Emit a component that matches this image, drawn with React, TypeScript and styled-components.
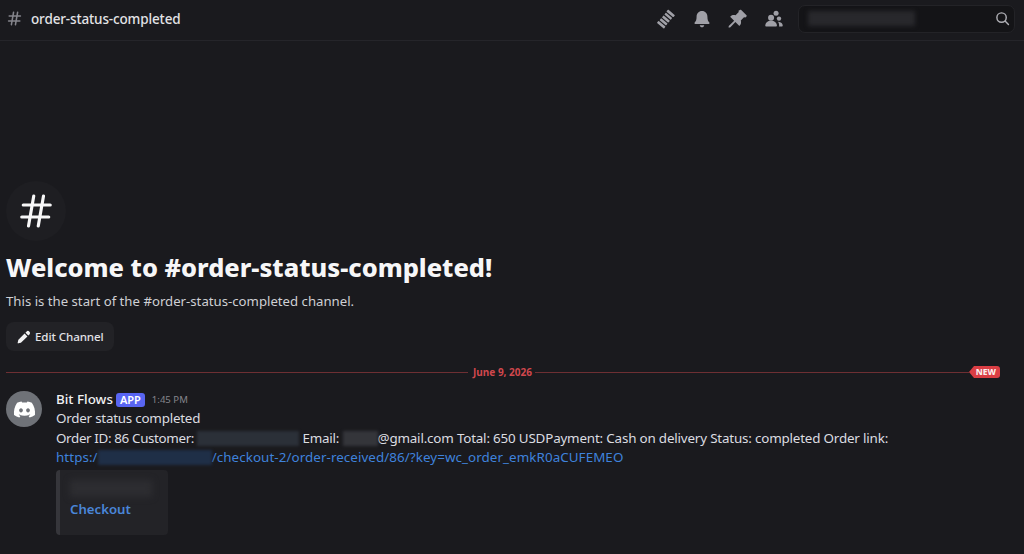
import React from "react";
import styled, { createGlobalStyle } from "styled-components";
import { FaDiscord } from "react-icons/fa";

const Global = createGlobalStyle`
  html, body { margin: 0; padding: 0; background: #1a1a1e; }
  body { font-family: "Noto Sans", "Liberation Sans", sans-serif; color: #dfe0e4; overflow: hidden; }
  * { box-sizing: border-box; }
`;

const Page = styled.div`
  width: 1024px;
  height: 554px;
  display: flex;
  flex-direction: column;
  background: #1a1a1e;
  overflow: hidden;
`;

const Header = styled.header`
  height: 41px;
  flex: none;
  display: flex;
  align-items: center;
  padding: 0 9px 3px 7px;
  border-bottom: 1px solid #25252a;
`;

const HeaderHash = styled.svg`
  width: 15px;
  height: 15px;
  color: #85858c;
  flex: none;
`;

const HeaderTitle = styled.h1`
  margin: 0 0 0 9px;
  font-size: 13.5px;
  font-weight: 500;
  line-height: 18px;
  letter-spacing: -0.14px;
  color: #e3e3e6;
  flex: 1;
`;

const Tools = styled.div`
  display: flex;
  align-items: center;
  gap: 16px;
  margin-right: 14px;
`;

const ToolIcon = styled.svg`
  width: 20px;
  height: 20px;
  color: #a0a0a7;
  display: block;
`;

const Search = styled.div`
  width: 217px;
  height: 28px;
  display: flex;
  align-items: center;
  justify-content: space-between;
  padding: 0 4px 0 9px;
  background: #141417;
  border: 1px solid #232327;
  border-radius: 7px;
`;

const SearchBlur = styled.div`
  width: 107px;
  height: 15px;
  background: #28282c;
  filter: blur(2px);
`;

const SearchIcon = styled.svg`
  width: 15px;
  height: 15px;
  color: #b0b0b6;
`;

const Main = styled.main`
  flex: 1;
  display: flex;
  flex-direction: column;
  padding-top: 140px;
`;

const Welcome = styled.section`
  padding: 0 6px;
  display: flex;
  flex-direction: column;
  align-items: flex-start;
`;

const HashCircle = styled.div`
  width: 60px;
  height: 60px;
  border-radius: 50%;
  background: #1e1e22;
  display: flex;
  align-items: center;
  justify-content: center;
`;

const BigHash = styled.svg`
  width: 36px;
  height: 36px;
  color: #f7f7f8;
`;

const WelcomeTitle = styled.h2`
  margin: 10px 0 0;
  font-size: 25.4px;
  line-height: 32px;
  font-weight: 800;
  color: #f7f7f8;
`;

const WelcomeText = styled.p`
  margin: 9px 0 0;
  font-size: 13.2px;
  line-height: 19px;
  color: #cfd0d4;
`;

const EditButton = styled.button`
  margin-top: 11px;
  height: 29px;
  padding: 0 10px 0 11px;
  display: flex;
  align-items: center;
  gap: 4px;
  background: #222226;
  border: none;
  border-radius: 8px;
  color: #e3e3e6;
  font: 500 11.6px "Noto Sans", sans-serif;
  letter-spacing: -0.1px;
`;

const PencilIcon = styled.svg`
  width: 14px;
  height: 14px;
  color: #f2f2f3;
`;

const Divider = styled.div`
  display: flex;
  align-items: center;
  margin: 12px 24px 0 6px;
  height: 18px;
`;

const Line = styled.div<{ $grow?: boolean }>`
  height: 1px;
  background: #6e2f33;
  flex: ${(p) => (p.$grow ? 1 : "none")};
  width: ${(p) => (p.$grow ? "auto" : "462px")};
`;

const DateLabel = styled.span`
  padding: 0 3px 0 5px;
  font-size: 10px;
  font-weight: 700;
  line-height: 12px;
  color: #d0474d;
`;

const NewBadge = styled.span`
  position: relative;
  height: 12px;
  padding: 0 4px 0 2px;
  background: #da3e44;
  border-radius: 0 3px 3px 0;
  color: #fbeeee;
  font-size: 8.5px;
  font-weight: 800;
  line-height: 12px;
  margin-left: 5px;

  &::before {
    content: "";
    position: absolute;
    left: -5px;
    top: 0;
    border-style: solid;
    border-width: 6px 5px 6px 0;
    border-color: transparent #da3e44 transparent transparent;
  }
`;

const Message = styled.article`
  display: flex;
  gap: 14px;
  padding: 10px 6px 0;
`;

const Avatar = styled.div`
  width: 36px;
  height: 36px;
  flex: none;
  border-radius: 50%;
  background: #6f7278;
  color: #fff;
  display: flex;
  align-items: center;
  justify-content: center;
  font-size: 23px;
`;

const Body = styled.div`
  display: flex;
  flex-direction: column;
  font-size: 13.4px;
  line-height: 19.5px;
  color: #dcdde1;
`;

const MetaRow = styled.div`
  display: flex;
  align-items: center;
  height: 18px;
`;

const Author = styled.span`
  font-size: 13.4px;
  font-weight: 500;
  color: #f0f0f2;
`;

const AppTag = styled.span`
  margin-left: 3px;
  height: 14px;
  padding: 0 4px;
  border-radius: 3px;
  background: #5865f2;
  color: #fff;
  font-size: 11px;
  font-weight: 600;
  line-height: 14px;
`;

const Time = styled.time`
  margin-left: 7px;
  font-size: 9.6px;
  color: #85858c;
`;

const TextLine = styled.div`
  white-space: nowrap;
`;

const Run = styled.span<{ $track: number }>`
  letter-spacing: ${(p) => p.$track}px;
`;

const Redacted = styled.span<{ $w: number; $c: string }>`
  display: inline-block;
  width: ${(p) => p.$w}px;
  height: 15px;
  vertical-align: -3px;
  background: ${(p) => p.$c};
  filter: blur(1.5px);
`;

const LinkText = styled.a`
  color: #3f82dc;
`;

const Embed = styled.aside`
  margin-top: 2px;
  width: 112px;
  height: 65px;
  background: #232327;
  border-left: 4px solid #36363b;
  border-radius: 4px;
  padding: 10px 10px;
  display: flex;
  flex-direction: column;
`;

const EmbedBlur = styled.div`
  width: 82px;
  height: 17px;
  background: #2d2d31;
  filter: blur(3px);
`;

const EmbedLink = styled.a`
  margin-top: 3px;
  font-size: 13.2px;
  font-weight: 600;
  color: #4a86d8;
`;

const hashD = "M10.5 2 7 22M17 2l-3.5 20M3.5 8h18M2.5 16h18";

export default function App() {
  return (
    <Page>
      <Global />
      <Header>
        <HeaderHash viewBox="0 0 24 24" fill="none" stroke="currentColor" strokeWidth="2.4" strokeLinecap="round">
          <path d={hashD} />
        </HeaderHash>
        <HeaderTitle>order-status-completed</HeaderTitle>
        <Tools>
          <ToolIcon viewBox="0 0 24 24" fill="currentColor">
            <g transform="rotate(-50 12 12)">
              <rect x="1.5" y="6.5" width="3.2" height="11" rx="0.8" />
              <rect x="6" y="7" width="3" height="10" rx="0.6" />
              <rect x="10.4" y="7" width="3" height="10" rx="0.6" />
              <rect x="14.8" y="7" width="3" height="10" rx="0.6" />
              <rect x="19.2" y="6.5" width="3.2" height="11" rx="0.8" />
            </g>
          </ToolIcon>
          <ToolIcon viewBox="0 0 24 24" fill="currentColor">
            <path d="M12 2.5c-3.9 0-6.5 3-6.5 6.8 0 3.7-.9 5.6-2.3 7-.5.6-.2 1.7.7 1.7h16.2c.9 0 1.2-1.1.7-1.7-1.4-1.4-2.3-3.3-2.3-7 0-3.8-2.6-6.8-6.5-6.8Z" />
            <path d="M9.3 19.5h5.4c-.2 1.5-1.3 2.5-2.7 2.5s-2.5-1-2.7-2.5Z" />
          </ToolIcon>
          <ToolIcon viewBox="1 1 22.5 22.5" fill="currentColor">
            <path d="M14.5 2.2c.4-.4 1-.4 1.4 0l5.9 5.9c.4.4.4 1 0 1.4l-1.2 1.2-1.6-.3-3.6 3.6c.7 2 .3 4.2-1.2 5.7l-.4.4-4.5-4.5-5.6 5.8c-.5.4-1.8.6-2 .4s0-1.5.4-2l5.8-5.6-4.5-4.5.4-.4c1.5-1.5 3.7-1.9 5.7-1.2l3.6-3.6-.3-1.6 1.7-.7Z" />
          </ToolIcon>
          <ToolIcon viewBox="0 0 24 24" fill="currentColor">
            <circle cx="14.5" cy="5" r="3" />
            <circle cx="8.5" cy="10.5" r="3.6" />
            <circle cx="18" cy="11.5" r="2.6" />
            <path d="M1.5 20c0-3.6 3-6 7-6s7 2.4 7 6c0 .6-.4 1-1 1h-12c-.6 0-1-.4-1-1Z" />
            <path d="M17 21h4.5c.6 0 1-.4 1-1 0-2.6-1.8-4.5-5.6-4.8.8 1.2 1.3 2.7 1.3 4.5 0 .5-.1.9-.2 1.3Z" />
          </ToolIcon>
        </Tools>
        <Search>
          <SearchBlur />
          <SearchIcon viewBox="0 0 24 24" fill="none" stroke="currentColor" strokeWidth="2.3" strokeLinecap="round">
            <circle cx="10.5" cy="10.5" r="7.5" />
            <path d="m16.5 16.5 5 5" />
          </SearchIcon>
        </Search>
      </Header>
      <Main>
        <Welcome>
          <HashCircle>
            <BigHash viewBox="0 0 24 24" fill="none" stroke="currentColor" strokeWidth="2.1" strokeLinecap="round">
              <path d={hashD} />
            </BigHash>
          </HashCircle>
          <WelcomeTitle>Welcome to #order-status-completed!</WelcomeTitle>
          <WelcomeText>This is the start of the #order-status-completed channel.</WelcomeText>
          <EditButton>
            <PencilIcon viewBox="0 0 24 24" fill="currentColor">
              <path d="M16.5 2.6a3 3 0 0 1 4.3 0l.6.6a3 3 0 0 1 0 4.3l-2 2-4.9-4.9 2-2ZM13 6.1 17.9 11 7.6 21.2c-.3.3-.6.5-1 .6l-4.3 1.1c-.8.2-1.4-.5-1.2-1.2l1.1-4.4c.1-.4.3-.7.6-1L13 6.1Z" />
            </PencilIcon>
            Edit Channel
          </EditButton>
        </Welcome>
        <Divider>
          <Line />
          <DateLabel>June 9, 2026</DateLabel>
          <Line $grow />
          <NewBadge>NEW</NewBadge>
        </Divider>
        <Message>
          <Avatar>
            <FaDiscord />
          </Avatar>
          <Body>
            <MetaRow>
              <Author>Bit Flows</Author>
              <AppTag>APP</AppTag>
              <Time>1:45 PM</Time>
            </MetaRow>
            <TextLine>
              <Run $track={-0.23}>Order status completed</Run>
            </TextLine>
            <TextLine>
              <Run $track={-0.36}>Order ID: 86 Customer: </Run>
              <Redacted $w={102} $c="#2b3038" />
              <Run $track={-0.2}> Email: </Run>
              <Redacted $w={35} $c="#34353a" />
              <Run $track={-0.18}>@gmail.com Total: 650 USDPayment: Cash on delivery Status: completed Order link:</Run>
            </TextLine>
            <TextLine>
              <LinkText>
                <Run $track={0.07}>https:/</Run>
                <Redacted $w={114} $c="#1f2f47" />
                <Run $track={0.07}>/checkout-2/order-received/86/?key=wc_order_emkR0aCUFEMEO</Run>
              </LinkText>
            </TextLine>
            <Embed>
              <EmbedBlur />
              <EmbedLink>Checkout</EmbedLink>
            </Embed>
          </Body>
        </Message>
      </Main>
    </Page>
  );
}
